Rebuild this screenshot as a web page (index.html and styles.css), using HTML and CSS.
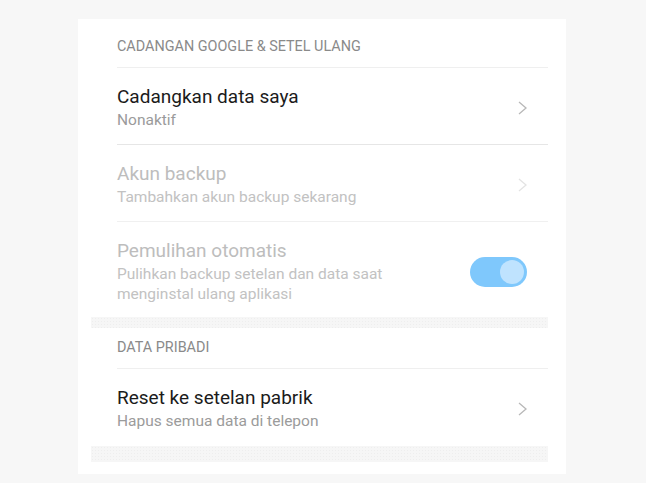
FILE: index.html
```html
<!DOCTYPE html>
<html lang="id">

<head>
    <meta charset="UTF-8">
    <meta name="viewport" content="width=device-width, initial-scale=1.0">
    <title>Cadangan &amp; setel ulang</title>
    <link rel="stylesheet" href="styles.css">
</head>

<body>
    <div class="card">
        <div class="group_title">CADANGAN GOOGLE &amp; SETEL ULANG</div>

        <div class="item">
            <div class="text">
                <div class="name">Cadangkan data saya</div>
                <div class="desc">Nonaktif</div>
            </div>
            <svg class="arrow" width="9" height="14" viewBox="0 0 9 14">
                <path d="M1 1 L8 7 L1 13" />
            </svg>
        </div>

        <div class="item disabled">
            <div class="text">
                <div class="name">Akun backup</div>
                <div class="desc">Tambahkan akun backup sekarang</div>
            </div>
            <svg class="arrow" width="9" height="14" viewBox="0 0 9 14">
                <path d="M1 1 L8 7 L1 13" />
            </svg>
        </div>

        <div class="item disabled last tall">
            <div class="text">
                <div class="name">Pemulihan otomatis</div>
                <div class="desc">Pulihkan backup setelan dan data saat<br>menginstal ulang aplikasi</div>
            </div>
            <div class="switch on">
                <div class="knob"></div>
            </div>
        </div>

        <div class="gap"></div>

        <div class="group_title">DATA PRIBADI</div>

        <div class="item last">
            <div class="text">
                <div class="name">Reset ke setelan pabrik</div>
                <div class="desc">Hapus semua data di telepon</div>
            </div>
            <svg class="arrow" width="9" height="14" viewBox="0 0 9 14">
                <path d="M1 1 L8 7 L1 13" />
            </svg>
        </div>

        <div class="gap big"></div>
    </div>
</body>

</html>
```

FILE: styles.css
```css
body {
    margin: 0;
    background-color: #f7f7f7;
    font-family: Roboto, "Noto Sans", sans-serif;
}

.card {
    width: 488px;
    height: 455px;
    margin: 19px 0 0 78px;
    padding-top: 8px;
    box-sizing: border-box;
    background-color: #fff;
    overflow: hidden;
}

.group_title {
    margin: 0 18px 0 39px;
    padding: 10px 0;
    font-size: 14.4px;
    line-height: 20px;
    color: #8a8a8a;
    border-bottom: 1px solid #efefef;
}

.item {
    display: flex;
    align-items: center;
    margin: 0 18px 0 39px;
    padding: 18px 0 14px;
    border-bottom: 1px solid #e6e6e6;
}

.item.disabled {
    border-bottom-color: #f0f0f0;
}

.item.last {
    border-bottom: none;
    padding-bottom: 15px;
}

.item.tall {
    padding-bottom: 13px;
}

.text {
    flex: 1;
}

.name {
    font-size: 19px;
    line-height: 22px;
    color: #1b1b1b;
}

.desc {
    margin-top: 2px;
    font-size: 15.5px;
    line-height: 20px;
    color: #9b9b9b;
}

.disabled .name {
    color: #bdbdbd;
}

.disabled .desc {
    color: #c2c2c2;
}

.arrow {
    margin-right: 21px;
}

.arrow path {
    fill: none;
    stroke: #b8b8b8;
    stroke-width: 1.3;
}

.disabled .arrow path {
    stroke: #e3e3e3;
}

.switch {
    display: flex;
    justify-content: flex-end;
    align-items: center;
    width: 57px;
    height: 30px;
    margin-right: 21px;
    padding: 0 3px;
    box-sizing: border-box;
    border-radius: 15px;
    background-color: #7fc8fc;
}

.knob {
    width: 24px;
    height: 24px;
    border-radius: 50%;
    background-color: #bfe3fe;
}

.gap {
    height: 11px;
    margin: 0 18px 0 13px;
    background-color: #f6f6f6;
    background-image: radial-gradient(#eeeeee 0.7px, transparent 0.8px);
    background-size: 3px 3px;
}

.gap.big {
    height: 16px;
}
```
